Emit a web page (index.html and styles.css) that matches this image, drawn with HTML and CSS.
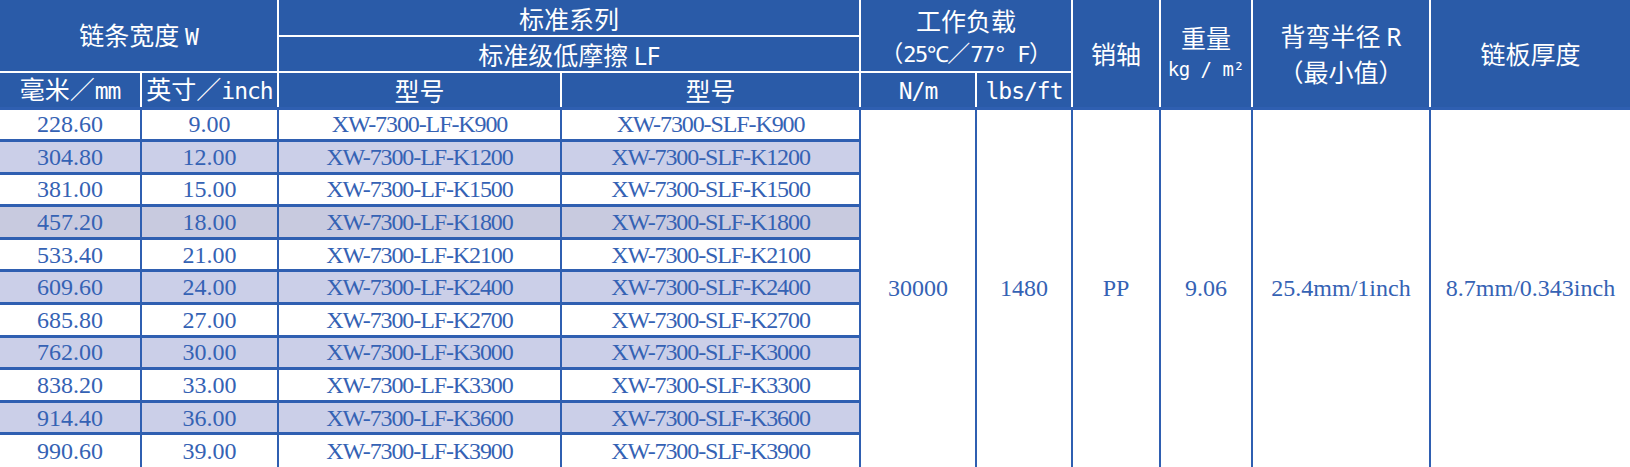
FILE: index.html
```html
<!DOCTYPE html>
<html lang="zh">
<head>
<meta charset="utf-8">
<title>XW-7300 规格表</title>
<link rel="stylesheet" href="styles.css">
</head>
<body>
<table class="spec">
  <colgroup>
    <col class="c1"><col class="c2"><col class="c3"><col class="c4"><col class="c5">
    <col class="c6"><col class="c7"><col class="c8"><col class="c9"><col class="c10">
  </colgroup>
  <thead>
    <tr class="h1">
      <th class="edge-l" colspan="2" rowspan="2">链条宽度 <span class="lat">W</span></th>
      <th colspan="2">标准系列</th>
      <th colspan="2" rowspan="2" class="two"><div class="ln">工作负载</div><div class="ln tmp">（<span class="lat">25℃</span>／<span class="lat">77° F</span>）</div></th>
      <th rowspan="3">销轴</th>
      <th rowspan="3" class="two"><div class="ln">重量</div><div class="ln unit">kg / m²</div></th>
      <th rowspan="3" class="two tall"><div class="ln">背弯半径 <span class="latp">R</span></div><div class="ln">（最小值）</div></th>
      <th rowspan="3" class="edge-r">链板厚度</th>
    </tr>
    <tr class="h2">
      <th colspan="2">标准级低摩擦 <span class="latp">LF</span></th>
    </tr>
    <tr class="h3">
      <th class="edge-l">毫米／<span class="lat">mm</span></th>
      <th>英寸／<span class="lat">inch</span></th>
      <th>型号</th>
      <th>型号</th>
      <th><span class="lat">N/m</span></th>
      <th><span class="lat">lbs/ft</span></th>
    </tr>
  </thead>
  <tbody>
    <tr>
      <td class="edge-l">228.60</td><td>9.00</td><td class="mdl">XW-7300-LF-K900</td><td class="mdl">XW-7300-SLF-K900</td>
      <td rowspan="11" class="merged">30000</td>
      <td rowspan="11" class="merged">1480</td>
      <td rowspan="11" class="merged">PP</td>
      <td rowspan="11" class="merged">9.06</td>
      <td rowspan="11" class="merged">25.4mm/1inch</td>
      <td rowspan="11" class="merged edge-r">8.7mm/0.343inch</td>
    </tr>
    <tr class="alt">
      <td class="edge-l">304.80</td><td>12.00</td><td class="mdl">XW-7300-LF-K1200</td><td class="mdl">XW-7300-SLF-K1200</td>
    </tr>
    <tr>
      <td class="edge-l">381.00</td><td>15.00</td><td class="mdl">XW-7300-LF-K1500</td><td class="mdl">XW-7300-SLF-K1500</td>
    </tr>
    <tr class="alt alt-dim">
      <td class="edge-l">457.20</td><td>18.00</td><td class="mdl">XW-7300-LF-K1800</td><td class="mdl">XW-7300-SLF-K1800</td>
    </tr>
    <tr>
      <td class="edge-l">533.40</td><td>21.00</td><td class="mdl">XW-7300-LF-K2100</td><td class="mdl">XW-7300-SLF-K2100</td>
    </tr>
    <tr class="alt">
      <td class="edge-l">609.60</td><td>24.00</td><td class="mdl">XW-7300-LF-K2400</td><td class="mdl">XW-7300-SLF-K2400</td>
    </tr>
    <tr>
      <td class="edge-l">685.80</td><td>27.00</td><td class="mdl">XW-7300-LF-K2700</td><td class="mdl">XW-7300-SLF-K2700</td>
    </tr>
    <tr class="alt">
      <td class="edge-l">762.00</td><td>30.00</td><td class="mdl">XW-7300-LF-K3000</td><td class="mdl">XW-7300-SLF-K3000</td>
    </tr>
    <tr>
      <td class="edge-l">838.20</td><td>33.00</td><td class="mdl">XW-7300-LF-K3300</td><td class="mdl">XW-7300-SLF-K3300</td>
    </tr>
    <tr class="alt">
      <td class="edge-l">914.40</td><td>36.00</td><td class="mdl">XW-7300-LF-K3600</td><td class="mdl">XW-7300-SLF-K3600</td>
    </tr>
    <tr class="last">
      <td class="edge-l">990.60</td><td>39.00</td><td class="mdl">XW-7300-LF-K3900</td><td class="mdl">XW-7300-SLF-K3900</td>
    </tr>
  </tbody>
</table>
</body>
</html>
```
FILE: styles.css
```css
html, body {
  margin: 0;
  padding: 0;
  background: #ffffff;
}

.spec {
  border-collapse: collapse;
  table-layout: fixed;
  width: 1630px;
}

.c1 { width: 141px; }
.c2 { width: 137px; }
.c3 { width: 283px; }
.c4 { width: 299px; }
.c5 { width: 116px; }
.c6 { width: 96px; }
.c7 { width: 88px; }
.c8 { width: 92px; }
.c9 { width: 178px; }
.c10 { width: 200px; }

.spec th {
  background: #2a5ba8;
  color: #ffffff;
  font-family: "Noto Sans CJK SC", "Noto Sans", sans-serif;
  font-weight: 400;
  font-size: 25px;
  line-height: 30px;
  padding: 0;
  border: 2px solid #ffffff;
  text-align: center;
  vertical-align: middle;
  white-space: nowrap;
}

.spec .h1 th { border-top: 0; }
.spec .h1 { height: 36px; }
.spec .h2 { height: 36px; }
.spec .h3 { height: 36px; }

.spec th.two .ln {
  height: 32px;
  line-height: 32px;
}

.spec th.tall .ln {
  height: 36px;
  line-height: 36px;
}

.spec .lat {
  font-family: "DejaVu Sans Mono", monospace;
  font-size: 23px;
  letter-spacing: -1px;
}

.spec .latp {
  font-family: "Noto Sans", sans-serif;
}

.spec .tmp {
  font-size: 23px;
}

.spec .tmp .lat {
  font-size: 22px;
  letter-spacing: -1.5px;
}

.spec .unit {
  font-family: "DejaVu Sans Mono", monospace;
  font-size: 19px;
  letter-spacing: -0.5px;
}

.spec td {
  color: #3562b4;
  font-family: "Liberation Serif", "Times New Roman", serif;
  font-size: 24px;
  line-height: 26px;
  padding: 0;
  text-align: center;
  vertical-align: middle;
  white-space: nowrap;
  border-left: 2px solid #2f5fb1;
  border-right: 2px solid #2f5fb1;
  border-top: 3px solid #2f5fb1;
  border-bottom: 3px solid #2f5fb1;
}

.spec tbody tr { height: 32.6px; }

.spec td.mdl { letter-spacing: -1.1px; }

.spec tbody tr.alt td { background: #cbcfe8; }
.spec tbody tr.alt-dim td { background: #c8cadf; }

.spec tbody tr.alt td.merged,
.spec td.merged {
  background: #ffffff;
  border-bottom: 0;
}

.spec tr.last td { border-bottom: 0; }

.spec .edge-l { border-left: 0; }
.spec .edge-r { border-right: 0; }
```
